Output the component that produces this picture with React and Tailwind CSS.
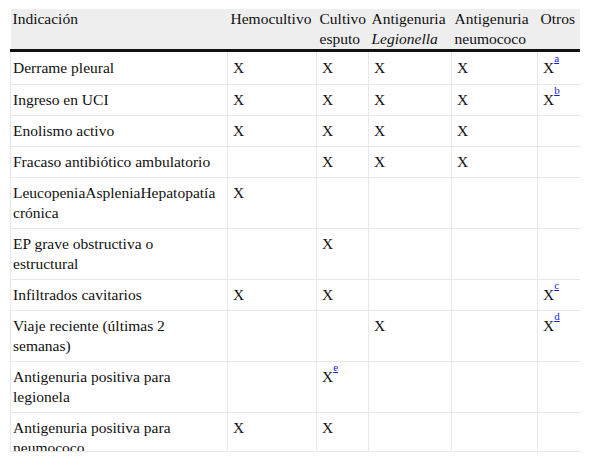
import React from 'react';

// each row: label, then 5 cells (null = empty, '' = X, letter = X with note)
const rows = [
    ['Derrame pleural', '', '', '', '', 'a'],
    ['Ingreso en UCI', '', '', '', '', 'b'],
    ['Enolismo activo', '', '', '', '', null],
    ['Fracaso antibiótico ambulatorio', null, '', '', '', null],
    ['LeucopeniaAspleniaHepatopatía crónica', '', null, null, null, null],
    ['EP grave obstructiva o estructural', null, '', null, null, null],
    ['Infiltrados cavitarios', '', '', null, null, 'c'],
    ['Viaje reciente (últimas 2 semanas)', null, null, '', null, 'd'],
    ['Antigenuria positiva para legionela', null, 'e', null, null, null],
    ['Antigenuria positiva para neumococo', '', '', null, null, null],
];

const Mark = ({ note }) => {
    if (note === null) return null;
    return (
        <span>
            X
            {note && (
                <sup className="text-[11px] text-[#1a1aee] underline align-[6px] leading-none">{note}</sup>
            )}
        </span>
    );
};

const App = () => {
    return (
        <main className="w-[590px] h-[462px] bg-white pt-[9px] pl-[10px] font-['Liberation_Serif',serif]">
            <div className="w-[570px] h-[443px] overflow-hidden border-b border-[#e8e8e8]">
                <table className="w-[570px] table-fixed border-collapse font-['Liberation_Serif',serif] text-[15.5px] leading-5 text-[#111]">
                    <colgroup>
                        <col className="w-[217px]" />
                        <col className="w-[89px]" />
                        <col className="w-[52px]" />
                        <col className="w-[83px]" />
                        <col className="w-[86px]" />
                        <col className="w-[43px]" />
                    </colgroup>
                    <thead>
                        <tr className="bg-[#eeeeee] h-[39px]">
                            <th className="text-left font-normal align-top pl-[2px] border-b-[3px] border-[#111]">
                                Indicación
                            </th>
                            <th className="text-left font-normal align-top pl-[3px] border-b-[3px] border-[#111]">
                                Hemocultivo
                            </th>
                            <th className="text-left font-normal align-top pl-[3px] border-b-[3px] border-[#111]">
                                Cultivo esputo
                            </th>
                            <th className="text-left font-normal align-top pl-[3px] border-b-[3px] border-[#111]">
                                Antigenuria <i>Legionella</i>
                            </th>
                            <th className="text-left font-normal align-top pl-[3px] border-b-[3px] border-[#111]">
                                Antigenuria neumococo
                            </th>
                            <th className="text-left font-normal align-top pl-[3px] border-b-[3px] border-[#111]">
                                Otros
                            </th>
                        </tr>
                    </thead>
                    <tbody>
                        {rows.map((row, i) => (
                            <tr key={i}>
                                <td className={`align-top border border-[#e8e8e8] pl-[2px] pr-[8px] ${i === 0 ? 'pt-[6px] pb-[6px]' : 'py-[5px]'}`}>
                                    {row[0]}
                                </td>
                                {row.slice(1).map((note, j) => (
                                    <td key={j} className={`align-top border border-[#e8e8e8] pl-[5px] ${i === 0 ? 'pt-[6px] pb-[6px]' : 'py-[5px]'}`}>
                                        <Mark note={note} />
                                    </td>
                                ))}
                            </tr>
                        ))}
                    </tbody>
                </table>
            </div>
        </main>
    );
};

export default App;
